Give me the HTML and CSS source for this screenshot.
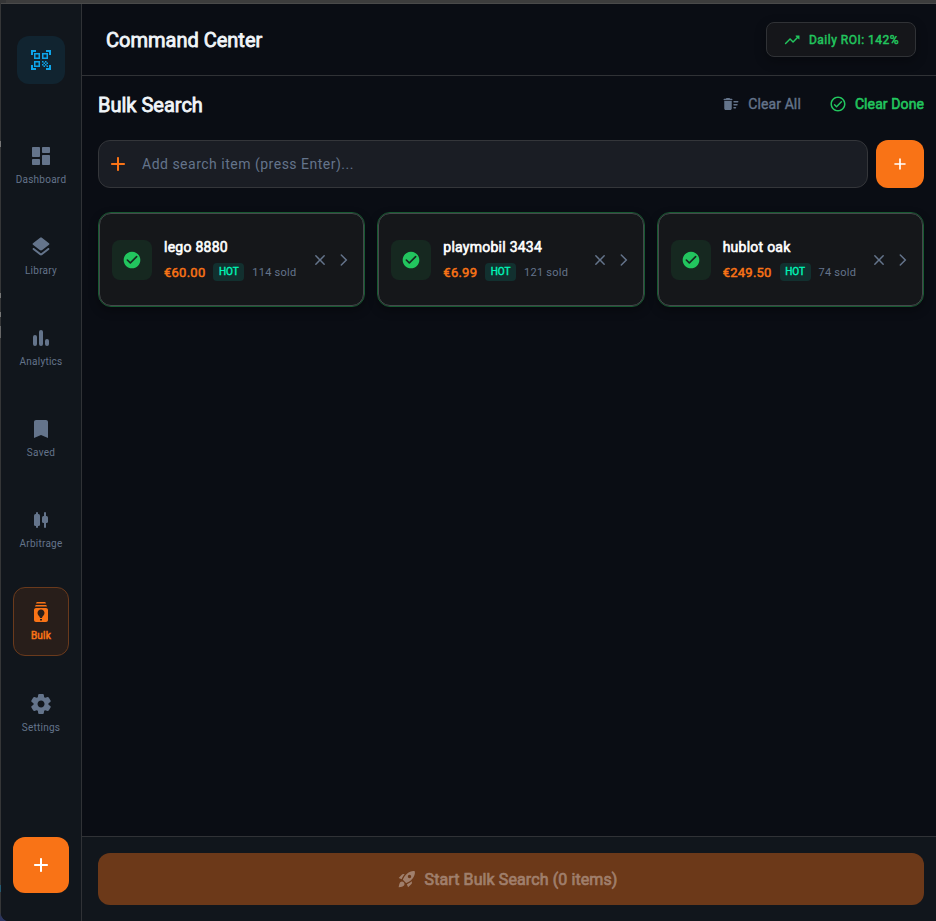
FILE: index.html
```html
<!DOCTYPE html>
<html lang="en">
<head>
    <meta charset="UTF-8">
    <meta name="viewport" content="width=device-width, initial-scale=1.0">
    <title>Command Center</title>
    <link rel="stylesheet" href="styles.css">
</head>
<body>
    <svg class="sprite">
        <symbol id="plus" viewBox="0 0 24 24"><path d="M18 13h-5v5c0 .55-.45 1-1 1s-1-.45-1-1v-5H6c-.55 0-1-.45-1-1s.45-1 1-1h5V6c0-.55.45-1 1-1s1 .45 1 1v5h5c.55 0 1 .45 1 1s-.45 1-1 1z"/></symbol>
        <symbol id="check" viewBox="0 0 24 24"><path d="M12 2C6.48 2 2 6.48 2 12s4.48 10 10 10 10-4.48 10-10S17.52 2 12 2zM9.29 16.29L5.7 12.7a1 1 0 0 1 1.41-1.41L10 14.17l6.88-6.88a1 1 0 0 1 1.41 1.41l-7.59 7.59a1 1 0 0 1-1.41 0z"/></symbol>
        <symbol id="close" viewBox="0 0 24 24"><path d="M18.3 5.71a1 1 0 0 0-1.41 0L12 10.59 7.11 5.7A1 1 0 0 0 5.7 7.11L10.59 12 5.7 16.89a1 1 0 0 0 1.41 1.41L12 13.41l4.89 4.89a1 1 0 0 0 1.41-1.41L13.41 12l4.89-4.89a1 1 0 0 0 0-1.4z"/></symbol>
        <symbol id="chevron" viewBox="0 0 24 24"><path d="M9.3 7l5 5-5 5" fill="none" stroke="currentColor" stroke-width="1.5" stroke-linecap="round"/></symbol>
    </svg>
    <div class="window">
        <nav class="sidebar">
            <div class="logo">
                <svg class="icon" viewBox="0 0 24 24"><path d="M9.5 6.5v3h-3v-3h3M11 5H5v6h6V5zm-1.5 9.5v3h-3v-3h3M11 13H5v6h6v-6zm6.5-6.5v3h-3v-3h3M19 5h-6v6h6V5zm-6 8h1.5v1.5H13V13zm1.5 1.5H16V16h-1.5v-1.5zM16 13h1.5v1.5H16V13zm-3 3h1.5v1.5H13V16zm1.5 1.5H16V19h-1.5v-1.5zM16 16h1.5v1.5H16V16zm1.5-1.5H19V16h-1.5v-1.5zm0 3H19V19h-1.5v-1.5zM22 7h-2V4h-3V2h5v5zm0 15v-5h-2v3h-3v2h5zM2 22h5v-2H4v-3H2v5zM2 2v5h2V4h3V2H2z"/></svg>
            </div>
            <ul class="nav">
                <li class="nav-item">
                    <svg class="icon" viewBox="0 0 24 24"><path d="M4 13h6c.55 0 1-.45 1-1V4c0-.55-.45-1-1-1H4c-.55 0-1 .45-1 1v8c0 .55.45 1 1 1zm0 8h6c.55 0 1-.45 1-1v-4c0-.55-.45-1-1-1H4c-.55 0-1 .45-1 1v4c0 .55.45 1 1 1zm10 0h6c.55 0 1-.45 1-1v-8c0-.55-.45-1-1-1h-6c-.55 0-1 .45-1 1v8c0 .55.45 1 1 1zM13 4v4c0 .55.45 1 1 1h6c.55 0 1-.45 1-1V4c0-.55-.45-1-1-1h-6c-.55 0-1 .45-1 1z"/></svg>
                    <span>Dashboard</span>
                </li>
                <li class="nav-item">
                    <svg class="icon" viewBox="0 0 24 24"><path d="M12.6 18.06c-.36.28-.87.28-1.23 0l-6.15-4.78c-.36-.28-.86-.28-1.22 0-.51.4-.51 1.17 0 1.57l6.76 5.26c.72.56 1.73.56 2.46 0l6.76-5.26c.51-.4.51-1.17 0-1.57l-.01-.01c-.36-.28-.86-.28-1.22 0l-6.15 4.79zm.63-3.02l6.76-5.26c.51-.4.51-1.18 0-1.58l-6.76-5.26c-.72-.56-1.73-.56-2.46 0L4.01 8.21c-.51.4-.51 1.18 0 1.58l6.76 5.26c.72.56 1.74.56 2.46-.01z"/></svg>
                    <span>Library</span>
                </li>
                <li class="nav-item">
                    <svg class="icon" viewBox="0 0 24 24"><rect x="4" y="9" width="4" height="11" rx="2"/><rect x="10" y="4" width="4" height="16" rx="2"/><rect x="16" y="13" width="4" height="7" rx="2"/></svg>
                    <span>Analytics</span>
                </li>
                <li class="nav-item">
                    <svg class="icon" viewBox="0 0 24 24"><path d="M17 3H7c-1.1 0-2 .9-2 2v16l7-3 7 3V5c0-1.1-.9-2-2-2z"/></svg>
                    <span>Saved</span>
                </li>
                <li class="nav-item">
                    <svg class="icon" viewBox="0 0 24 24"><rect x="5" y="6" width="6" height="12" rx="1.5"/><rect x="7" y="4" width="2" height="16" rx="1"/><rect x="13" y="8" width="6" height="7" rx="1.5"/><rect x="15" y="4" width="2" height="16" rx="1"/></svg>
                    <span>Arbitrage</span>
                </li>
                <li class="nav-item active">
                    <svg class="icon" viewBox="0 0 24 24"><path d="M17 8H7c-1.1 0-2 .9-2 2v10c0 1.1.9 2 2 2h10c1.1 0 2-.9 2-2V10c0-1.1-.9-2-2-2zm-4 12.5h-2V19h2v1.5zm0-2.5h-2c0-1.5-2.5-3-2.5-5 0-1.93 1.57-3.5 3.5-3.5s3.5 1.57 3.5 3.5c0 2-2.5 3.5-2.5 5zm5-11.5H6C6 5.67 6.67 5 7.5 5h9c.83 0 1.5.67 1.5 1.5zm-1-3H7C7 2.67 7.67 2 8.5 2h7c.83 0 1.5.67 1.5 1.5z"/></svg>
                    <span>Bulk</span>
                </li>
                <li class="nav-item">
                    <svg class="icon" viewBox="0 0 24 24"><path d="M19.5 12c0-.23-.01-.45-.03-.68l1.86-1.41c.4-.3.51-.86.26-1.3l-1.87-3.23c-.25-.44-.79-.62-1.25-.42l-2.15.91c-.37-.26-.76-.49-1.17-.68l-.29-2.31c-.06-.5-.49-.88-.99-.88h-3.73c-.51 0-.94.38-1 .88l-.29 2.31c-.41.19-.8.42-1.17.68l-2.15-.91c-.46-.2-1-.02-1.25.42L2.41 8.62c-.25.44-.14.99.26 1.3l1.86 1.41c-.02.22-.03.44-.03.67s.01.45.03.68l-1.86 1.41c-.4.3-.51.86-.26 1.3l1.87 3.23c.25.44.79.62 1.25.42l2.15-.91c.37.26.76.49 1.17.68l.29 2.31c.06.5.49.88.99.88h3.73c.5 0 .93-.38.99-.88l.29-2.31c.41-.19.8-.42 1.17-.68l2.15.91c.46.2 1 .02 1.25-.42l1.87-3.23c.25-.44.14-.99-.26-1.3l-1.86-1.41c.03-.23.04-.45.04-.68zm-7.46 3.5c-1.93 0-3.5-1.57-3.5-3.5s1.57-3.5 3.5-3.5 3.5 1.57 3.5 3.5-1.57 3.5-3.5 3.5z"/></svg>
                    <span>Settings</span>
                </li>
            </ul>
            <button class="fab"><svg class="icon"><use href="#plus"/></svg></button>
        </nav>
        <main class="main">
            <header class="header">
                <h1>Command Center</h1>
                <div class="roi">
                    <svg class="icon" viewBox="0 0 24 24"><path d="M16.85 6.85l1.44 1.44-4.88 4.88-3.29-3.29c-.39-.39-1.02-.39-1.41 0l-6 6.01c-.39.39-.39 1.02 0 1.41.39.39 1.02.39 1.41 0L9.41 12l3.29 3.29c.39.39 1.02.39 1.41 0l5.59-5.58 1.44 1.44c.31.31.85.09.85-.35V6.5c.01-.28-.21-.5-.49-.5h-4.29c-.45 0-.67.54-.36.85z"/></svg>
                    <span>Daily ROI: 142%</span>
                </div>
            </header>
            <section class="content">
                <div class="toolbar">
                    <h2>Bulk Search</h2>
                    <button class="action">
                        <svg class="icon" viewBox="0 0 24 24"><path d="M16 16h2c.55 0 1 .45 1 1s-.45 1-1 1h-2c-.55 0-1-.45-1-1s.45-1 1-1zm0-8h5c.55 0 1 .45 1 1s-.45 1-1 1h-5c-.55 0-1-.45-1-1s.45-1 1-1zm0 4h4c.55 0 1 .45 1 1s-.45 1-1 1h-4c-.55 0-1-.45-1-1s.45-1 1-1zM3 18c0 1.1.9 2 2 2h6c1.1 0 2-.9 2-2V8H3v10zM13 5h-2l-.71-.71c-.18-.18-.44-.29-.7-.29H6.41c-.26 0-.52.11-.7.29L5 5H3c-.55 0-1 .45-1 1s.45 1 1 1h10c.55 0 1-.45 1-1s-.45-1-1-1z"/></svg>
                        <span>Clear All</span>
                    </button>
                    <button class="action done">
                        <svg class="icon" viewBox="0 0 24 24"><path d="M12 2C6.48 2 2 6.48 2 12s4.48 10 10 10 10-4.48 10-10S17.52 2 12 2zm0 18c-4.41 0-8-3.59-8-8s3.59-8 8-8 8 3.59 8 8-3.59 8-8 8zm3.88-11.71L10 14.17l-1.88-1.88a1 1 0 0 0-1.41 1.41l2.59 2.59a1 1 0 0 0 1.41 0L17.3 9.7a1 1 0 0 0-1.42-1.41z"/></svg>
                        <span>Clear Done</span>
                    </button>
                </div>
                <div class="search-row">
                    <label class="search">
                        <svg class="icon"><use href="#plus"/></svg>
                        <input type="text" placeholder="Add search item (press Enter)...">
                    </label>
                    <button class="add"><svg class="icon"><use href="#plus"/></svg></button>
                </div>
                <div class="cards">
                    <div class="card">
                        <div class="card-inner">
                            <div class="status"><svg class="icon"><use href="#check"/></svg></div>
                            <div class="info">
                                <h3>lego 8880</h3>
                                <div class="meta"><span class="price">€60.00</span><span class="hot">HOT</span><span class="sold">114 sold</span></div>
                            </div>
                            <svg class="icon close"><use href="#close"/></svg>
                            <svg class="icon chevron"><use href="#chevron"/></svg>
                        </div>
                    </div>
                    <div class="card">
                        <div class="card-inner">
                            <div class="status"><svg class="icon"><use href="#check"/></svg></div>
                            <div class="info">
                                <h3>playmobil 3434</h3>
                                <div class="meta"><span class="price">€6.99</span><span class="hot">HOT</span><span class="sold">121 sold</span></div>
                            </div>
                            <svg class="icon close"><use href="#close"/></svg>
                            <svg class="icon chevron"><use href="#chevron"/></svg>
                        </div>
                    </div>
                    <div class="card">
                        <div class="card-inner">
                            <div class="status"><svg class="icon"><use href="#check"/></svg></div>
                            <div class="info">
                                <h3>hublot oak</h3>
                                <div class="meta"><span class="price">€249.50</span><span class="hot">HOT</span><span class="sold">74 sold</span></div>
                            </div>
                            <svg class="icon close"><use href="#close"/></svg>
                            <svg class="icon chevron"><use href="#chevron"/></svg>
                        </div>
                    </div>
                </div>
            </section>
            <footer class="footer">
                <button class="start" disabled>
                    <svg class="icon" viewBox="0 0 24 24"><path d="M9.19 6.35c-2.04 2.29-3.44 5.58-3.57 5.89L2 10.69l4.05-4.05c.47-.47 1.15-.68 1.81-.55l1.33.26zM11.17 17s3.74-1.55 5.89-3.7c5.4-5.4 4.5-9.62 4.21-10.57-.95-.3-5.17-1.19-10.57 4.21C8.55 9.09 7 12.83 7 12.83L11.17 17zm6.48-2.19c-2.29 2.04-5.58 3.44-5.89 3.57L13.31 22l4.05-4.05c.47-.47.68-1.15.55-1.81l-.26-1.33zM9 18c0 .83-.34 1.58-.88 2.12C6.94 21.3 2 22 2 22s.7-4.94 1.88-6.12C4.42 15.34 5.17 15 6 15c1.66 0 3 1.34 3 3zm4-9c0-1.1.9-2 2-2s2 .9 2 2-.9 2-2 2-2-.9-2-2z"/></svg>
                    <span>Start Bulk Search (0 items)</span>
                </button>
            </footer>
        </main>
    </div>
</body>
</html>
```
FILE: styles.css
```css
* {
    box-sizing: border-box;
}
body {
    margin: 0;
    height: 921px;
    padding: 3px 0 0 1px;
    background-color: #3d3d3d;
    background-image: linear-gradient(#353637 141px, #777 141px, #777 147px, #353637 147px, #353637 293px, #777 293px, #777 298px, #353637 298px, #353637 312px, #777 312px, #777 317px, #353637 317px, #353637 326px, #666 326px, #666 338px, #353637 338px, #353637 885px, #245a70 885px, #245a70 892px, #353637 892px, #353637 912px, #2b3560 918px);
    background-size: 6px 921px;
    background-repeat: no-repeat;
    font-family: Roboto, sans-serif;
    color: #f1f5f9;
    overflow: hidden;
}
h1, h2, h3, ul {
    margin: 0;
    padding: 0;
    font-weight: 400;
}
button {
    border: none;
    padding: 0;
    font-family: inherit;
    display: flex;
    align-items: center;
    justify-content: center;
}
.sprite {
    display: none;
}
.icon {
    width: 24px;
    height: 24px;
    fill: currentColor;
    flex-shrink: 0;
}
.window {
    display: flex;
    height: 918px;
    border-top: 1px solid #4a4a4a;
    border-bottom-left-radius: 8px;
    background-color: #0a0d14;
    overflow: hidden;
}
.sidebar {
    width: 81px;
    padding: 32px 0 28px;
    display: flex;
    flex-direction: column;
    align-items: center;
    background-color: #11161c;
    border-right: 1px solid #303236;
}
.logo {
    width: 48px;
    height: 48px;
    margin-bottom: 48px;
    display: flex;
    align-items: center;
    justify-content: center;
    border-radius: 12px;
    background-color: #112430;
    color: #0ea5e9;
}
.nav {
    list-style: none;
    display: flex;
    flex-direction: column;
    gap: 24px;
}
.nav-item {
    width: 56px;
    padding: 12px 0;
    display: flex;
    flex-direction: column;
    align-items: center;
    gap: 4px;
    font-size: 10px;
    line-height: 15px;
    letter-spacing: 0.25px;
    white-space: nowrap;
    color: #64748b;
}
.nav-item.active {
    border: 1px solid #6a3a1c;
    border-radius: 12px;
    background-color: #281e1a;
    color: #f97316;
    -webkit-text-stroke: 0.5px;
}
.fab, .add {
    color: #fff;
    background-color: #f97316;
    border-radius: 12px;
}
.fab {
    width: 56px;
    height: 56px;
    margin-top: auto;
}
.main {
    flex: 1;
    display: flex;
    flex-direction: column;
}
.header {
    height: 72px;
    padding: 0 20px 0 24px;
    display: flex;
    align-items: center;
    justify-content: space-between;
    border-bottom: 1px solid #303236;
}
h1, h2 {
    font-size: 20px;
    line-height: 28px;
    -webkit-text-stroke: 0.8px;
}
.roi {
    width: 150px;
    height: 35px;
    display: flex;
    align-items: center;
    justify-content: center;
    gap: 8px;
    border: 1px solid #303236;
    border-radius: 8px;
    background-color: #15161a;
    box-shadow: 0 4px 12px rgba(0, 0, 0, 0.3);
    color: #22c55e;
    font-size: 12px;
    letter-spacing: 0.5px;
    -webkit-text-stroke: 0.5px;
}
.roi .icon {
    width: 18px;
    height: 18px;
    stroke: none;
}
.content {
    flex: 1;
    padding: 8px 12px 0 16px;
}
.toolbar {
    height: 40px;
    margin-bottom: 16px;
    display: flex;
    align-items: center;
}
.toolbar h2 {
    margin-right: auto;
    padding-top: 2px;
}
.action {
    gap: 8px;
    margin-left: 28px;
    background: none;
    color: #64748b;
    font-size: 14px;
    letter-spacing: 0.1px;
    -webkit-text-stroke: 0.4px;
}
.action .icon {
    width: 18px;
    height: 18px;
    stroke: none;
}
.action.done {
    color: #22c55e;
    -webkit-text-stroke: 0.6px;
}
.search-row {
    display: flex;
    gap: 8px;
    margin-bottom: 24px;
}
.search {
    flex: 1;
    height: 48px;
    padding: 0 7px;
    display: flex;
    align-items: center;
    gap: 10px;
    border: 1px solid #34363a;
    border-radius: 12px;
    background-color: #1a1d24;
    color: #f97316;
}
.search input {
    flex: 1;
    border: none;
    outline: none;
    background: none;
    color: #f1f5f9;
    font-family: inherit;
    font-size: 14px;
    letter-spacing: 0.5px;
}
.search input::placeholder {
    color: #64748b;
}
.add {
    width: 48px;
    height: 48px;
}
.add .icon {
    width: 20px;
    height: 20px;
}
.cards {
    display: grid;
    grid-template-columns: repeat(3, 1fr);
    gap: 12px;
}
.card {
    height: 95px;
    border: 1px solid #165a31;
    border-radius: 13px;
    background-color: #141c1a;
    box-shadow: 0 4px 10px rgba(0, 0, 0, 0.3);
}
.card-inner {
    height: 93px;
    padding: 0 7px 0 12px;
    display: flex;
    align-items: center;
    border: 1px solid #45484b;
    border-radius: 12px;
    background-color: #15171a;
}
.status {
    width: 40px;
    height: 40px;
    margin-right: 12px;
    display: flex;
    align-items: center;
    justify-content: center;
    border-radius: 8px;
    background-color: #162820;
    color: #22c55e;
}
.status .icon {
    width: 20px;
    height: 20px;
}
.info {
    flex: 1;
}
h3 {
    color: #fff;
    font-size: 14px;
    line-height: 20px;
    margin-bottom: 5px;
    letter-spacing: 0.25px;
    -webkit-text-stroke: 0.6px;
}
.meta {
    display: flex;
    align-items: center;
    gap: 8px;
    height: 20px;
    white-space: nowrap;
}
.price {
    color: #f97316;
    font-size: 13px;
    letter-spacing: 0.25px;
    -webkit-text-stroke: 0.5px;
}
.hot {
    height: 18px;
    padding: 0 5.5px;
    border-radius: 4px;
    background-color: #12302f;
    color: #00f5b8;
    font-size: 10px;
    line-height: 18px;
    -webkit-text-stroke: 0.4px;
}
.sold {
    color: #64748b;
    font-size: 11px;
    letter-spacing: 0.25px;
}
.close {
    width: 18px;
    height: 18px;
    color: #64748b;
}
.chevron {
    width: 24px;
    height: 24px;
    margin-left: 3px;
    color: #64748b;
}
.footer {
    padding: 16px 12px 16px 16px;
    background-color: #11161c;
    border-top: 1px solid #303236;
}
.start {
    width: 100%;
    height: 52px;
    padding-right: 8px;
    gap: 8px;
    border-radius: 12px;
    background-color: #6c3919;
    color: #a07f6c;
    font-size: 16px;
    letter-spacing: 0.1px;
    -webkit-text-stroke: 0.7px;
}
.start .icon {
    width: 20px;
    height: 20px;
    stroke: none;
}
```
